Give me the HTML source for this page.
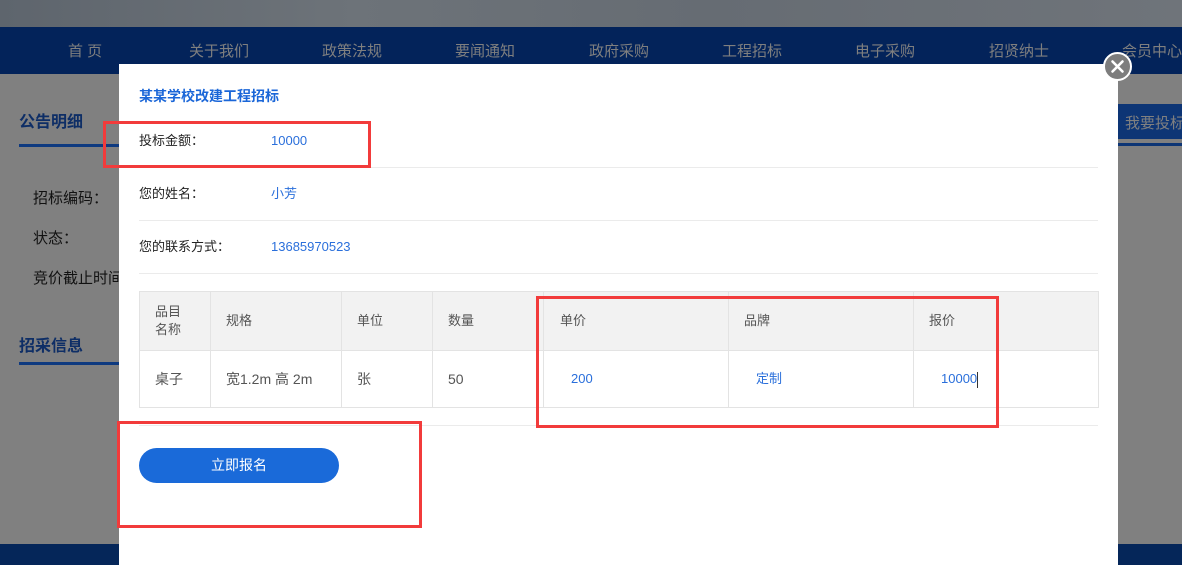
<!DOCTYPE html>
<html><head><meta charset="utf-8"><style>
*{margin:0;padding:0;box-sizing:border-box}
body{width:1182px;height:565px;overflow:hidden;position:relative;background:#808080;font-family:"Liberation Sans","Noto Sans CJK SC",sans-serif}
.a{position:absolute}
.top{left:0;top:0;width:1182px;height:27px;background:linear-gradient(90deg,#5e656d,#6d7379 30%,#666c73 60%,#6f747a)}
.nav{left:0;top:27px;width:1182px;height:47px;background:#03235a}
.nav span{position:absolute;top:13px;color:#7f7f7f;font-size:15px}
.bt{left:0;top:544px;width:1182px;height:21px;background:#052659}
.lt{font-size:15px;color:#111}
.modal{left:119px;top:64px;width:999px;height:501px;background:#fff}
.lbl,.val{font-size:13px;height:18px;line-height:18px}
.lbl{color:#222}
.val{color:#2a6fdb}
.line{height:1px;background:#ebebeb;left:139px;width:959px}
table{position:absolute;left:139px;top:291px;border-collapse:collapse;font-size:14px;color:#555}
td{border:1px solid #e3e3e3;padding:0 0 0 15px;vertical-align:middle;line-height:18px}
tr.h td{background:#f2f2f2;height:59px;font-size:13px}
tr.b td{height:57px}
.red{border:3px solid #f23b3b}
</style></head><body>
<div class="a top"></div>
<div class="a nav">
<span style="left:68px">首 页</span><span style="left:189px">关于我们</span><span style="left:322px">政策法规</span><span style="left:455px">要闻通知</span><span style="left:589px">政府采购</span><span style="left:722px">工程招标</span><span style="left:855px">电子采购</span><span style="left:989px">招贤纳士</span><span style="left:1122px">会员中心</span>
</div>
<div class="a" style="left:19px;top:108px;font-size:16px;font-weight:bold;color:#0e2e66">公告明细</div>
<div class="a" style="left:19px;top:144px;width:110px;height:3px;background:#0e3a80"></div>
<div class="a lt" style="left:33px;top:187px">招标编码：</div>
<div class="a lt" style="left:33px;top:227px">状态：</div>
<div class="a lt" style="left:33px;top:267px">竞价截止时间</div>
<div class="a" style="left:19px;top:332px;font-size:16px;font-weight:bold;color:#0e2e66">招采信息</div>
<div class="a" style="left:19px;top:362px;width:110px;height:3px;background:#0e3a80"></div>
<div class="a" style="left:1118px;top:104px;width:64px;height:35px;background:#0d3575;color:#808080;font-size:15px;padding:8px 0 0 7px;white-space:nowrap;overflow:hidden">我要投标</div>
<div class="a" style="left:1118px;top:143px;width:64px;height:3px;background:#0d3575"></div>
<div class="a bt"></div>
<div class="a modal"></div>
<div class="a" style="left:139px;top:86px;font-size:14px;font-weight:bold;color:#1a66d8">某某学校改建工程招标</div>
<div class="a lbl" style="left:139px;top:132px">投标金额：</div><div class="a val" style="left:271px;top:132px">10000</div>
<div class="a line" style="top:167px"></div>
<div class="a lbl" style="left:139px;top:185px">您的姓名：</div><div class="a val" style="left:271px;top:185px">小芳</div>
<div class="a line" style="top:220px"></div>
<div class="a lbl" style="left:139px;top:238px">您的联系方式：</div><div class="a val" style="left:271px;top:238px">13685970523</div>
<div class="a line" style="top:273px"></div>
<table>
<tr class="h"><td style="width:71px">品目<br>名称</td><td style="width:131px">规格</td><td style="width:91px">单位</td><td style="width:111px">数量</td><td style="width:185px;padding-left:16px">单价</td><td style="width:185px">品牌</td><td style="width:185px">报价</td></tr>
<tr class="b"><td>桌子</td><td>宽1.2m 高 2m</td><td>张</td><td>50</td><td style="color:#2a6fdb;padding-left:27px;font-size:13px">200</td><td style="color:#2a6fdb;padding-left:27px;font-size:13px">定制</td><td style="color:#2a6fdb;padding-left:27px;font-size:13px">10000<span style="display:inline-block;width:1px;height:16px;background:#333;vertical-align:middle"></span></td></tr>
</table>
<div class="a line" style="top:425px"></div>
<div class="a" style="left:139px;top:448px;width:200px;height:35px;border-radius:18px;background:#1a6ad9;color:#fff;font-size:14px;text-align:center;line-height:35px">立即报名</div>
<div class="a red" style="left:103px;top:121px;width:268px;height:47px"></div>
<div class="a red" style="left:536px;top:296px;width:463px;height:132px"></div>
<div class="a red" style="left:117px;top:421px;width:305px;height:107px"></div>
<div class="a" style="left:1103px;top:52px;width:29px;height:29px;border-radius:50%;background:#7d7d7d;border:2px solid #fff"></div>
<svg class="a" style="left:1103px;top:52px" width="29" height="29" viewBox="0 0 29 29"><path d="M9.5 9.5L19.5 19.5M19.5 9.5L9.5 19.5" stroke="#fff" stroke-width="2.6" stroke-linecap="round"/></svg>
</body></html>
